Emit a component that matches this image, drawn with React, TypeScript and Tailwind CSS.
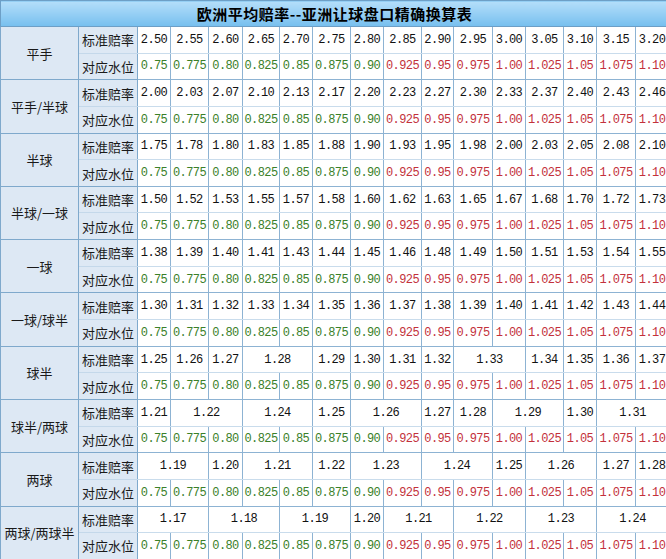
import { Fragment } from "react";

const widths = [78, 59, 33, 38, 34, 37, 33, 38, 33, 38, 32, 39, 33, 38, 33, 39, 33];

const waters = [
  "0.75", "0.775", "0.80", "0.825", "0.85", "0.875", "0.90",
  "0.925", "0.95", "0.975", "1.00", "1.025", "1.05", "1.075", "1.10",
];

// [value, colSpan]
type Odd = [string, number];

const single = (list: string): Odd[] => list.split(" ").map((v) => [v, 1] as Odd);

const groups: { name: string; odds: Odd[] }[] = [
  { name: "平手", odds: single("2.50 2.55 2.60 2.65 2.70 2.75 2.80 2.85 2.90 2.95 3.00 3.05 3.10 3.15 3.20") },
  { name: "平手/半球", odds: single("2.00 2.03 2.07 2.10 2.13 2.17 2.20 2.23 2.27 2.30 2.33 2.37 2.40 2.43 2.46") },
  { name: "半球", odds: single("1.75 1.78 1.80 1.83 1.85 1.88 1.90 1.93 1.95 1.98 2.00 2.03 2.05 2.08 2.10") },
  { name: "半球/一球", odds: single("1.50 1.52 1.53 1.55 1.57 1.58 1.60 1.62 1.63 1.65 1.67 1.68 1.70 1.72 1.73") },
  { name: "一球", odds: single("1.38 1.39 1.40 1.41 1.43 1.44 1.45 1.46 1.48 1.49 1.50 1.51 1.53 1.54 1.55") },
  { name: "一球/球半", odds: single("1.30 1.31 1.32 1.33 1.34 1.35 1.36 1.37 1.38 1.39 1.40 1.41 1.42 1.43 1.44") },
  {
    name: "球半",
    odds: [
      ["1.25", 1], ["1.26", 1], ["1.27", 1], ["1.28", 2], ["1.29", 1], ["1.30", 1],
      ["1.31", 1], ["1.32", 1], ["1.33", 2], ["1.34", 1], ["1.35", 1], ["1.36", 1], ["1.37", 1],
    ],
  },
  {
    name: "球半/两球",
    odds: [
      ["1.21", 1], ["1.22", 2], ["1.24", 2], ["1.25", 1], ["1.26", 2],
      ["1.27", 1], ["1.28", 1], ["1.29", 2], ["1.30", 1], ["1.31", 2],
    ],
  },
  {
    name: "两球",
    odds: [
      ["1.19", 2], ["1.20", 1], ["1.21", 2], ["1.22", 1], ["1.23", 2],
      ["1.24", 2], ["1.25", 1], ["1.26", 2], ["1.27", 1], ["1.28", 1],
    ],
  },
  {
    name: "两球/两球半",
    odds: [
      ["1.17", 2], ["1.18", 2], ["1.19", 2], ["1.20", 1],
      ["1.21", 2], ["1.22", 2], ["1.23", 2], ["1.24", 2],
    ],
  },
];

const cjk = "font-['Noto_Sans_CJK_SC',sans-serif] text-[13px] text-[#1a1a1a]";
const num = "font-['Liberation_Mono',monospace] text-[12px] tracking-[-0.6px] text-center";

export default function App() {
  return (
    <div className="w-[666px] h-[559px] overflow-hidden bg-white">
      <table className="table-fixed border-collapse w-[668px]">
        <colgroup>
          {widths.map((w, i) => (
            <col key={i} style={{ width: `${w}px` }} />
          ))}
        </colgroup>
        <tbody>
          {/* Title bar */}
          <tr className="h-[26px]">
            <td
              colSpan={17}
              className="border border-[#6d9fc6] bg-gradient-to-b from-[#b4defa] to-[#76bfee] text-center font-['Noto_Sans_CJK_SC',sans-serif] text-[15px] font-bold tracking-[0.5px] text-black leading-none"
            >
              欧洲平均赔率--亚洲让球盘口精确换算表
            </td>
          </tr>
          {groups.map((g) => (
            <Fragment key={g.name}>
              <tr className="h-[26.65px]">
                <td
                  rowSpan={2}
                  className={`border border-[#7fa9cc] bg-[#dde8f4] text-center leading-none ${cjk}`}
                >
                  {g.name}
                </td>
                <td className={`border border-[#7fa9cc] border-b-[#c4d8ea] bg-[#dde8f4] text-center leading-none ${cjk}`}>
                  标准赔率
                </td>
                {g.odds.map(([v, span], i) => (
                  <td
                    key={i}
                    colSpan={span}
                    className={`border border-[#8db3d3] border-b-[#c9dcec] bg-white text-[#111] leading-none ${num}`}
                  >
                    {v}
                  </td>
                ))}
              </tr>
              <tr className="h-[26.65px]">
                <td className={`border border-[#7fa9cc] bg-[#dde8f4] text-center leading-none ${cjk}`}>
                  对应水位
                </td>
                {waters.map((w, i) => (
                  <td
                    key={i}
                    className={`border border-[#8db3d3] bg-white leading-none ${num} ${
                      i < 7 ? "text-[#3a8029]" : "text-[#c3313b]"
                    }`}
                  >
                    {w}
                  </td>
                ))}
              </tr>
            </Fragment>
          ))}
        </tbody>
      </table>
    </div>
  );
}
